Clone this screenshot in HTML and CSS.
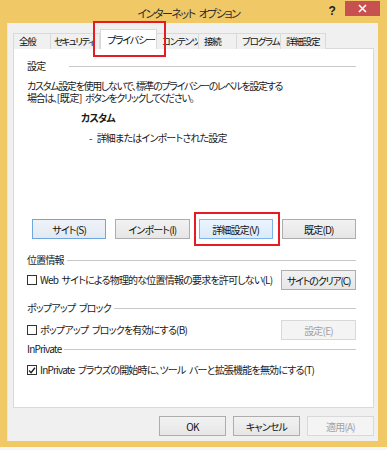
FILE: index.html
```html
<!DOCTYPE html>
<html>
<head>
    <meta name="viewport" content="width=device-width, initial-scale=1.0">
    <link rel="stylesheet" href="styles.css">
</head>
<body>
    <div class="window">
        <div class="titlebar">
            <span></span>
            <span class="title">インターネット オプション</span>
            <div class="caption-btns">
                <span class="help">?</span>
                <span class="close">
                    <svg width="9" height="9" viewBox="0 0 9 9"><path d="M1 1L8 8M8 1L1 8" stroke="#fff" stroke-width="1.6"/></svg>
                </span>
            </div>
        </div>

        <div class="dialog">
            <div class="tabs">
                <div class="tab t-general">全般</div>
                <div class="tab t-security">セキュリティ</div>
                <div class="tab t-privacy active marked">プライバシー</div>
                <div class="tab t-content">コンテンツ</div>
                <div class="tab t-conn">接続</div>
                <div class="tab t-prog">プログラム</div>
                <div class="tab t-adv">詳細設定</div>
            </div>

            <div class="panel">
                <div class="group-head"><span>設定</span></div>
                <div class="desc">
                    <div>カスタム設定を使用しないで、標準のプライバシーのレベルを設定する</div>
                    <div>場合は、<span class="plain">[既定]</span> ボタンをクリックしてください。</div>
                </div>
                <div class="level">カスタム</div>
                <div class="level-note"><span class="dash">-</span>詳細またはインポートされた設定</div>

                <div class="btn-row">
                    <button class="btn focused">サイト(S)</button>
                    <button class="btn">インポート(I)</button>
                    <button class="btn hot marked">詳細設定(V)</button>
                    <button class="btn">既定(D)</button>
                </div>

                <div class="group-head g-location"><span>位置情報</span></div>
                <div class="check-row r-location">
                    <label class="check"><span class="box"></span>Web サイトによる物理的な位置情報の要求を許可しない(L)</label>
                    <button class="btn side tight">サイトのクリア(C)</button>
                </div>

                <div class="group-head g-popup"><span>ポップアップ ブロック</span></div>
                <div class="check-row r-popup">
                    <label class="check"><span class="box"></span>ポップアップ ブロックを有効にする(B)</label>
                    <button class="btn side" disabled>設定(E)</button>
                </div>

                <div class="group-head g-private"><span>InPrivate</span></div>
                <div class="check-row r-private">
                    <label class="check"><span class="box checked">
                        <svg width="9" height="9" viewBox="0 0 9 9"><path d="M1.2 4.6L3.5 7L7.8 1.4" fill="none" stroke="#222" stroke-width="1.6"/></svg>
                    </span>InPrivate ブラウズの開始時に、ツール バーと拡張機能を無効にする(T)</label>
                </div>
            </div>

            <div class="footer">
                <button class="btn">OK</button>
                <button class="btn">キャンセル</button>
                <button class="btn" disabled>適用(A)</button>
            </div>
        </div>
    </div>
</body>
</html>
```

FILE: styles.css
```css
* {margin: 0; padding: 0; box-sizing: border-box;}
body {
    background: #f6f6f6;
    font-family: "Noto Sans CJK JP", sans-serif;
    font-size: 10px;
    letter-spacing: -0.8px;
    word-spacing: 2px;
    color: #1a1a1a;
    font-feature-settings: "palt";
}

.window {
    width: 387px;
    height: 447px;
    background: #f0c865;
    padding: 0 9px 6px 7px;
    display: flex;
    flex-direction: column;
}

.titlebar {
    height: 23px;
    display: grid;
    grid-template-columns: 1fr auto 1fr;
    align-items: start;
    margin: 0 -9px 0 -7px;
}

.title {
    font-size: 11px;
    line-height: 27px;
    color: #2b2b2b;
    letter-spacing: -1.5px;
    word-spacing: 3px;
    padding-right: 10px;
}

.caption-btns {
    display: flex;
    justify-content: flex-end;
    align-items: flex-start;
    padding-right: 7px;
}

.help {
    font-family: "Liberation Sans", sans-serif;
    font-weight: bold;
    font-size: 12px;
    line-height: 22px;
    color: #222;
    margin-right: 10px;
}

.close {
    width: 35px;
    height: 15px;
    margin-top: 1px;
    background: #c75050;
    display: flex;
    align-items: center;
    justify-content: center;
}

.dialog {
    flex: 1;
    background: #f0f0f0;
    border-left: 1px solid #f7e6bb;
    padding: 6px 4px 0 5px;
    display: flex;
    flex-direction: column;
}

.tabs {
    display: flex;
    align-items: flex-end;
    height: 20px;
    margin-bottom: -1px;
    position: relative;
    z-index: 1;
}

.tab {
    height: 16px;
    border: 1px solid #d9d9d9;
    border-bottom: none;
    border-left: none;
    background: #f0f0f0;
    font-size: 9.5px;
    letter-spacing: -1.2px;
    line-height: 15px;
    padding-left: 5px;
    white-space: nowrap;
    overflow: hidden;
    color: #111;
}
.tab:first-child { border-left: 1px solid #d9d9d9; }
.tab.active {
    height: 20px;
    background: #fff;
    border-left: 1px solid #d9d9d9;
    font-size: 10px;
    line-height: 19px;
    padding-left: 6px;
    overflow: visible;
    position: relative;
}
.t-general { width: 38px; }
.t-security { width: 49px; padding-left: 3px; letter-spacing: -1.6px; }
.t-privacy { width: 57px; }
.t-content { width: 42px; }
.t-conn { width: 38px; }
.t-prog { width: 44px; }
.t-adv { width: 45px; }

.panel {
    height: 360px;
    background: #fff;
    border: 1px solid #d9d9d9;
    padding: 10px 17px 0 13px;
}

.group-head {
    display: flex;
    align-items: center;
    gap: 3px;
    height: 14px;
    line-height: 14px;
}
.group-head::after {
    content: '';
    flex: 1;
    height: 1px;
    background: #c8c8c8;
}
.group-head:first-child span { width: 39px; }

.desc {
    margin-top: 7px;
    line-height: 12px;
    letter-spacing: -1.3px;
}
.desc .plain { letter-spacing: -0.4px; }

.level {
    margin-top: 8px;
    padding-left: 54px;
    line-height: 12px;
    font-weight: bold;
}

.level-note {
    margin-top: 8px;
    padding-left: 62px;
    line-height: 12px;
}
.dash { margin-right: 5px; }

.btn {
    font: inherit;
    letter-spacing: inherit;
    word-spacing: inherit;
    font-feature-settings: "palt";
    height: 20px;
    border: 1px solid #adadad;
    background: linear-gradient(#f2f2f2, #e6e6e6);
    color: #111;
    text-align: center;
    line-height: 17px;
    white-space: nowrap;
    position: relative;
}
.btn.focused { border-color: #6ea7e0; background: linear-gradient(#eef3f8, #e2e9f1); }
.btn.hot { border-color: #7eb4ea; background: linear-gradient(#eaf4fd, #dbebfa); }
.btn:disabled { color: #a3a3a3; border-color: #d9d9d9; background: #f4f4f4; }
.btn.tight { letter-spacing: -1.2px; }

.btn-row {
    margin-top: 75px;
    padding-left: 5px;
    display: grid;
    grid-template-columns: repeat(4, 1fr);
    gap: 9px;
}

.g-location { margin-top: 14px; }
.g-popup { margin-top: 11px; }
.g-private { margin-top: 2px; }

.check-row {
    display: flex;
    align-items: center;
    justify-content: space-between;
}
.r-location { margin-top: 3px; }
.r-popup { margin-top: 5px; }
.r-private { margin-top: 7px; height: 14px; }

.check {
    display: flex;
    align-items: center;
    gap: 3px;
    line-height: 14px;
    white-space: nowrap;
}

.box {
    width: 10px;
    height: 10px;
    flex: none;
    border: 1px solid #333;
    background: #fff;
    display: flex;
    align-items: center;
    justify-content: center;
}

.side { width: 75px; flex: none; }

.footer {
    display: flex;
    justify-content: flex-end;
    gap: 7px;
    margin-top: 8px;
}
.footer .btn { width: 67px; }

/* red highlight boxes drawn over the screenshot */
.marked::after {
    content: '';
    position: absolute;
    border: 2px solid #e51c23;
    pointer-events: none;
}
.tab.marked::after { left: -8px; right: -10px; top: -9px; bottom: -8px; }
.btn.marked::after { left: -6px; right: -8px; top: -8px; bottom: -8px; }
```
